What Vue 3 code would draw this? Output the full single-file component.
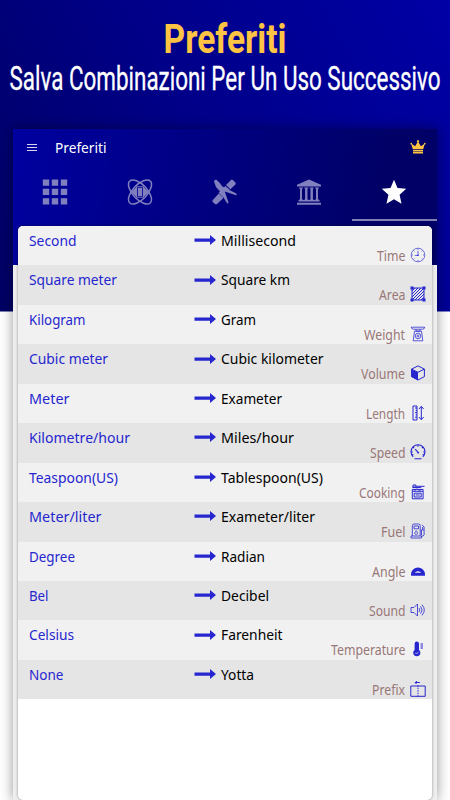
<script setup>
const rows = [
  { from: 'Second', fromWidth: 47.5, to: 'Millisecond', toWidth: 75, category: 'Time', width: 28.5 },
  { from: 'Square meter', fromWidth: 88, to: 'Square km', toWidth: 69, category: 'Area', width: 26.5 },
  { from: 'Kilogram', fromWidth: 56.5, to: 'Gram', toWidth: 35, category: 'Weight', width: 41 },
  { from: 'Cubic meter', fromWidth: 79, to: 'Cubic kilometer', toWidth: 102.5, category: 'Volume', width: 44 },
  { from: 'Meter', fromWidth: 40.5, to: 'Exameter', toWidth: 61, category: 'Length', width: 39 },
  { from: 'Kilometre/hour', fromWidth: 101, to: 'Miles/hour', toWidth: 73, category: 'Speed', width: 35.5 },
  { from: 'Teaspoon(US)', fromWidth: 89, to: 'Tablespoon(US)', toWidth: 102, category: 'Cooking', width: 46 },
  { from: 'Meter/liter', fromWidth: 72.5, to: 'Exameter/liter', toWidth: 94, category: 'Fuel', width: 24.5 },
  { from: 'Degree', fromWidth: 46, to: 'Radian', toWidth: 44, category: 'Angle', width: 33.5 },
  { from: 'Bel', fromWidth: 19.5, to: 'Decibel', toWidth: 48, category: 'Sound', width: 36.5 },
  { from: 'Celsius', fromWidth: 45, to: 'Farenheit', toWidth: 61.5, category: 'Temperature', width: 74.5 },
  { from: 'None', fromWidth: 34.5, to: 'Yotta', toWidth: 33, category: 'Prefix', width: 33 }
];
</script>

<template>
  <div class="page">
    <header class="hero">
      <svg class="title" width="450" height="60">
        <text x="163.5" y="52.7" textLength="123" lengthAdjust="spacingAndGlyphs">Preferiti</text>
      </svg>
      <svg class="subtitle" width="450" height="40">
        <text x="9.5" y="29.7" textLength="431" lengthAdjust="spacingAndGlyphs">Salva Combinazioni Per Un Uso Successivo</text>
      </svg>
    </header>

    <main class="phone">
      <div class="top">
        <div class="bar">
          <div class="menu"><i></i><i></i><i></i></div>
          <svg class="bar-title" width="60" height="24">
            <text x="0" y="17" textLength="51.5" lengthAdjust="spacingAndGlyphs">Preferiti</text>
          </svg>
          <svg class="crown" width="16" height="14" viewBox="0 0 16 14">
            <path d="M2.8 9.3 1.4 4.4A.8.8 0 1 1 1.9 4L5.1 6.2 7.5 2.2a1.1 1.1 0 1 1 1 0L10.9 6.2 14.1 4a.8.8 0 1 1 .5.4L13.2 9.3z" />
            <path d="M3 10h10v1H3zM3 11.6h10v1.8H3z" />
          </svg>
        </div>
        <nav class="tabs">
          <div class="tab">
            <svg width="26" height="26" viewBox="0 0 26 26" fill="currentColor">
              <path d="M.8.5h6.4v6.2H.8zM9.8.5h6.4v6.2H9.8zM18.8.5h6.4v6.2h-6.4zM.8 9.8h6.4V16H.8zM9.8 9.8h6.4V16H9.8zM18.8 9.8h6.4V16h-6.4zM.8 19.3h6.4v6.2H.8zM9.8 19.3h6.4v6.2H9.8zM18.8 19.3h6.4v6.2h-6.4z" />
            </svg>
          </div>
          <div class="tab">
            <svg width="26" height="26" viewBox="0 0 26 26" fill="none" stroke="currentColor" stroke-width="1.5">
              <ellipse cx="13" cy="13" rx="15" ry="7.2" transform="rotate(47 13 13)" />
              <ellipse cx="13" cy="13" rx="15" ry="7.2" transform="rotate(-47 13 13)" />
              <path d="M4.5 13 9 8.2v9.6zM21.5 13 17 8.2v9.6z" fill="currentColor" stroke="none" />
              <path d="M9.5 7.8h7v10.4h-7z" stroke-width="1" />
              <path d="M10.8 9h4.4v8h-4.4z" fill="currentColor" stroke="none" />
            </svg>
          </div>
          <div class="tab">
            <svg width="26" height="26" viewBox="0 0 26 26" fill="currentColor">
              <path d="M1.6 21.3 7.8 14.4l4.6 4.6-6.4 6q-1 .8-2 0L1.8 23q-.8-.8-.2-1.7zM15 6 20 1q1-.8 1.8 0l2.6 2.6q.8 1 0 1.8l-5 4.8z" />
              <path d="m12.3 9.3 2-2.2 4.5 3.6-2 2.2zM7.6 13.8l2.2-2.4 4.2 4.3-2 2.6z" />
              <path d="M2.8 2 5 .6l3.4 2.8 3 4.2L25.3 14.6l.3 1.8-11.8-4 3.8 11.4-1.4.8L8.4 11.8 5 8z" />
            </svg>
          </div>
          <div class="tab">
            <svg width="26" height="26" viewBox="0 0 26 26" fill="currentColor">
              <path d="M13 .5 25 5.8v1.7H1V5.8zM3 8.5h4v1H6v11h1v1H3v-1h1v-11H3zM8.3 8.5h4v1h-1v11h1v1h-4v-1h1v-11h-1zM13.7 8.5h4v1h-1v11h1v1h-4v-1h1v-11h-1zM19 8.5h4v1h-1v11h1v1h-4v-1h1v-11h-1z" />
              <path d="M4 9.2h1.8v12H4zM9.3 9.2h2v12h-2zM14.7 9.2h2v12h-2zM20.2 9.2H22v12h-1.8zM2.5 21h21v1.6h-21zM1 23.7h24v2H1z" />
            </svg>
          </div>
          <div class="tab active">
            <svg width="26" height="26" viewBox="0 0 26 26" fill="currentColor">
              <path d="m13 .8 3.5 8.3 8.7.7-6.6 5.9 1.9 9.1L13 20.2l-7.5 4.6 1.9-9.1L.8 9.8l8.7-.7z" />
            </svg>
          </div>
        </nav>
      </div>

      <section class="list">
        <div v-for="row in rows" :key="row.category" class="row">
          <svg class="from" width="165" height="26">
            <text x="0" y="20" :textLength="row.fromWidth" lengthAdjust="spacingAndGlyphs">{{ row.from }}</text>
          </svg>
          <svg class="arrow" width="22" height="12" viewBox="0 0 22 12">
            <path d="M.5 4.5H16V1l6 5-6 5V7.7H.5z" />
          </svg>
          <svg class="to" width="110" height="26">
            <text x="0" y="20" :textLength="row.toWidth" lengthAdjust="spacingAndGlyphs">{{ row.to }}</text>
          </svg>
          <div class="category">
            <svg class="category-name" :width="row.width" height="20">
              <text x="0" y="15" :textLength="row.width" lengthAdjust="spacingAndGlyphs">{{ row.category }}</text>
            </svg>
            <svg class="icon" width="16" height="16" viewBox="0 0 16 16">
              <g v-if="row.category === 'Time'" stroke-width=".65">
                <circle cx="8" cy="8" r="6.8" />
                <path d="M8 3.7V8.5H4.8M8 1.8v1M8 13v1M2 8h1M13 8h1M3.8 3.8l.6.6M12.2 3.8l-.6.6M3.8 12.2l.6-.6M12.2 12.2l-.6-.6" />
                <circle cx="8" cy="8.2" r=".8" class="solid" />
              </g>
              <g v-else-if="row.category === 'Area'">
                <path d="M2 2h12v12H2z" />
                <path d="M2 5 5 2M2 8l6-6M2 11l9-9M2 14 14 2M5 14l9-9M8 14l6-6M11 14l3-3" />
                <path d="M.5.5h3v3h-3zM12.5.5h3v3h-3zM.5 12.5h3v3h-3zM12.5 12.5h3v3h-3z" class="solid" />
              </g>
              <g v-else-if="row.category === 'Weight'" stroke-width=".75">
                <path d="M1.2 1.2h13.6q-.3 2-2.3 2h-9q-2 0-2.3-2zM6 3.2v2h4v-2M4.5 5.2h7l1.3 9.6H3.2z" />
                <circle cx="8" cy="10" r="2.8" />
                <circle cx="8" cy="10" r="1" />
              </g>
              <g v-else-if="row.category === 'Volume'">
                <path d="m8 .9 6.4 3.2v7.5L8 15l-6.4-3.4V4.1zM1.6 4.1 8 7.3l6.4-3.2" />
                <path d="M1.2 4.2 8 7.4v7.8l-6.8-3.5z" class="solid" />
              </g>
              <g v-else-if="row.category === 'Length'">
                <path d="M3 1h4v14H3zM7 3H5M7 5.3H5.6M7 7.6H5M7 9.9H5.6M7 12.2H5M11.3 1.5v13M9 4l2.3-2.7L13.6 4M9 12l2.3 2.7 2.3-2.7" />
              </g>
              <g v-else-if="row.category === 'Speed'" stroke-width="1.1">
                <path d="M3.2 12.8A7 7 0 1 1 12.8 12.8M4.5 14.7h7" />
                <path d="m5.2 5.2 3 3.5M8 1v1.8M1 8h1.8M13.2 8H15M3 3l1.1 1.1M13 3l-1.1 1.1M2 11l1.4-.6M14 11l-1.4-.6" />
                <circle cx="8.2" cy="8.7" r=".9" class="solid" />
              </g>
              <g v-else-if="row.category === 'Cooking'">
                <path d="M2.3 5.4h10.8v9.4H2.3zM3 1h3v2H3zM2.3 3.4h9M7 4.5V2.3h7.5M4.2 9.2h7v3.8h-7zM5.7 11h4M2.5 7.3h10.4" />
                <path d="M3.8 6h2M8 6h3" />
              </g>
              <g v-else-if="row.category === 'Fuel'" stroke-width=".8">
                <path d="M2.3 13V2.8Q2.3 1 4 1h4.7q1.5 0 1.5 1.8V13M1 13h10.5v2H1zM4 3h4.5v2.8H4zM10.3 7h1.2v5q1.3 2.5 2.6 0V4L12 1.8M12.5 4v3H14" />
                <path d="M6.2 7.7c-2.2 3-1.5 3.6 0 3.6s2.2-.6 0-3.6z" />
              </g>
              <path v-else-if="row.category === 'Angle'" d="M1 11.4a7 7 0 0 1 14 0v.9q0 .5-.5.5h-13q-.5 0-.5-.5zm3.7-1.6h6.6a3.7 3 0 0 0-6.6 0z" class="solid" fill-rule="evenodd" />
              <g v-else-if="row.category === 'Sound'" stroke-width=".8">
                <path d="M1 5.5h3L7.5 2v12L4 10.5H1zM9 6q1.6 2 0 4M10.6 4.3q3 3.7 0 7.4M12 2.7q4.6 5.3 0 10.6" />
              </g>
              <g v-else-if="row.category === 'Temperature'">
                <path d="M4.6 2.7a2.2 2.2 0 0 1 4.4 0v6.2a3.6 3.6 0 1 1-4.4 0z" class="solid" />
                <path d="M10.5 3H13M10.5 5H13M10.5 7H13" />
                <path d="m5.3 11.8 1.2 1.2L8.5 10.8" class="light" />
              </g>
              <g v-else>
                <path d="M.8 5h14.4v10.3H.8zM5 1.8l2-1.6M5 1.5h4.8M5 1.5l1.5 1.5" />
                <path d="M8 4.2v11.5" stroke-dasharray="1.5 1" />
              </g>
            </svg>
          </div>
        </div>
      </section>
    </main>
  </div>
</template>

<style>
  body {
    margin: 0;
    overflow: hidden;
  }
</style>

<style scoped>
  .page {
    width: 450px;
    height: 800px;
    overflow: hidden;
    background: linear-gradient(63deg, #000064 0%, #000087 45%, #0000a5 100%) 0 0 / 100% 311.5px no-repeat white;
    font-family: "Noto Sans", "Open Sans", sans-serif;
  }

  svg {
    display: block;
    flex: none;
    overflow: visible;
  }

  .hero {
    height: 129px;
    font-family: Roboto, "Liberation Sans", sans-serif;
  }

  .title {
    fill: #ffc444;
    font-size: 41.5px;
    font-weight: 700;
  }

  .subtitle {
    fill: white;
    stroke: white;
    stroke-width: 0.3px;
    font-size: 32.3px;
    font-weight: 400;
  }

  .phone {
    width: 424px;
    height: 671px;
    margin-left: 13px;
    background: linear-gradient(102deg, #0000a0, #000066 85%) 0 0 / 100% 136px no-repeat #eeeeee;
    box-shadow: 0 0 12px rgba(0, 0, 0, 0.42);
  }

  .top {
    height: 97px;
  }

  .bar {
    display: flex;
    height: 36px;
    padding: 0 11.5px 0 14px;
    align-items: center;
  }

  .menu {
    display: flex;
    width: 10px;
    flex-direction: column;
    gap: 2px;
  }

  .menu i {
    height: 1px;
    background: #d5d5ef;
  }

  .bar-title {
    margin: 2px auto 0 18px;
    fill: white;
    font-size: 14.5px;
  }

  .crown {
    fill: #ffc444;
  }

  .tabs {
    display: grid;
    height: 56px;
    grid-template-columns: repeat(5, 1fr);
  }

  .tab {
    display: flex;
    justify-content: center;
    align-items: center;
    color: #8080bf;
    border-bottom: 2px solid transparent;
  }

  .tab svg {
    margin: 0 1px 0.5px 0;
  }

  .tab.active {
    color: white;
    border-color: #8080b7;
  }

  .list {
    width: 413.5px;
    height: 574px;
    margin-left: 5px;
    overflow: hidden;
    background: white;
    border-radius: 5px;
    box-shadow: 0 0 3px rgba(0, 0, 0, 0.4);
  }

  .row {
    display: flex;
    height: 39.45px;
    padding-left: 10.7px;
    background: #f1f1f1;
    font-size: 14.4px;
  }

  .row:nth-child(even) {
    background: #e5e5e5;
  }

  .from {
    fill: #2626cf;
  }

  .arrow {
    margin: 8.3px 4.8px 0 0.3px;
    fill: #2626cf;
  }

  .to {
    fill: black;
  }

  .category {
    display: flex;
    width: 96px;
    margin: 20px 0 0 -0.4px;
    justify-content: flex-end;
    gap: 5px;
  }

  .category-name {
    fill: #997777;
    font-size: 13.5px;
  }

  .icon {
    margin-top: 1px;
    fill: none;
    stroke: #2626cf;
    stroke-width: 1;
  }

  .solid {
    fill: #2626cf;
    stroke: none;
  }

  .light {
    stroke: #b5b5f0;
  }
</style>
